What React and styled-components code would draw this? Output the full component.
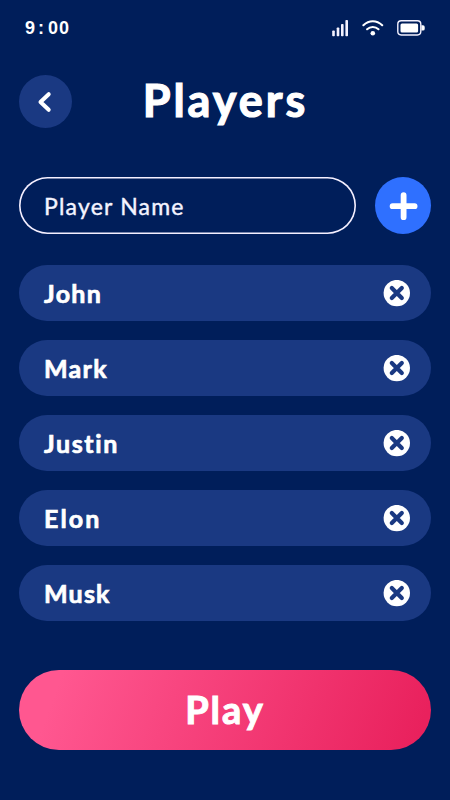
import React, {useState} from 'react'
import styled, {createGlobalStyle} from 'styled-components'


const GlobalStyle = createGlobalStyle`
    * {
        box-sizing: border-box;
    }
    body {
        margin: 0;
        background: #001e5a;
    }
    button, input {
        font-family: inherit;
        border: none;
        padding: 0;
        cursor: pointer;
    }
`;

const StyledScreen = styled.div`
    width: 450px;
    height: 800px;
    padding: 0 19px;
    background: #001e5a;
    color: #ffffff;
    font-family: Lato, "Noto Sans", sans-serif;
    overflow: hidden;
`;

const StyledStatusBar = styled.div`
    height: 55px;
    padding: 0 6px;
    display: flex;
    align-items: center;
    justify-content: space-between;
`;

const StyledTime = styled.div`
    padding-top: 2px;
    font-family: "Liberation Sans", sans-serif;
    font-size: 18px;
    font-weight: 700;
    letter-spacing: 1px;
`;

const StyledColon = styled.span`
    margin: 0 3px 0 2px;
`;

const StyledStatusIcons = styled.div`
    display: flex;
    align-items: center;
    gap: 13px;
`;

const StyledHeader = styled.header`
    height: 53px;
    margin-top: 20px;
    display: grid;
    grid-template-columns: 53px 1fr 53px;
    align-items: center;
`;

const StyledBackButton = styled.button`
    width: 53px;
    height: 53px;
    border-radius: 50%;
    background: #1a3982;
    display: flex;
    align-items: center;
    justify-content: center;
`;

const StyledTitle = styled.h1`
    margin: 0;
    padding: 0 0 3px 1px;
    font-size: 45px;
    line-height: 50px;
    font-weight: 700;
    letter-spacing: 3px;
    text-align: center;
    -webkit-text-stroke: 1.2px #ffffff;
`;

const StyledForm = styled.div`
    margin-top: 49px;
    display: flex;
    gap: 19px;
`;

const StyledInput = styled.input`
    width: 337px;
    height: 57px;
    padding: 0 25px;
    border-radius: 29px;
    box-shadow: inset 0 0 0 1.6px #f4efff;
    outline: none;
    background: transparent;
    color: #ffffff;
    font-size: 23px;
    letter-spacing: 1.2px;
    cursor: text;
    -webkit-text-stroke: 0.4px #f4f4ff;

    &::placeholder {
        color: #f4f4ff;
        opacity: 1;
    }
`;

const StyledAddButton = styled.button`
    width: 57px;
    height: 57px;
    border-radius: 50%;
    background: #2f70ff;
    display: flex;
    align-items: center;
    justify-content: center;
`;

const StyledList = styled.ul`
    margin: 31px 0 0;
    padding: 0;
    list-style: none;
    display: flex;
    flex-direction: column;
    gap: 19px;
`;

const StyledPlayer = styled.li`
    height: 56px;
    padding: 0 21px 0 25px;
    border-radius: 28px;
    background: #1a3982;
    display: flex;
    align-items: center;
    justify-content: space-between;
`;

const StyledName = styled.span`
    font-size: 25px;
    font-weight: 700;
    letter-spacing: ${props => props.$spacing}px;
    -webkit-text-stroke: 0.7px #ffffff;
`;

const StyledRemoveButton = styled.button`
    width: 27px;
    height: 27px;
    background: none;
    display: flex;
`;

const StyledPlayButton = styled.button`
    width: 412px;
    height: 80px;
    margin-top: 49px;
    padding-bottom: 2px;
    border-radius: 40px;
    background: linear-gradient(110deg, #ff5790 10%, #e9215d 96%);
    color: #ffffff;
    font-size: 38px;
    font-weight: 700;
    letter-spacing: 2px;
    -webkit-text-stroke: 1px #ffffff;
`;

const SignalIcon = () => (
    <svg width="17" height="18" viewBox="0 0 17 18" fill="#f4f2ff">
        <rect x="0.2" y="11.5" width="2.6" height="5.8" rx="0.8" />
        <rect x="4.7" y="8.5" width="2.6" height="8.8" rx="0.8" />
        <rect x="9" y="5" width="2.6" height="12.3" rx="0.8" />
        <rect x="13.4" y="1" width="2.6" height="16.3" rx="0.8" />
    </svg>
)

const WifiIcon = () => (
    <svg width="22" height="18" viewBox="0 0 22 18" fill="none" stroke="#ffffff" strokeWidth="2.1" strokeLinecap="round">
        <path d="M1.4 6.2C7 0.9 14.6 0.9 20.2 6.2" />
        <path d="M5.1 10.2C8.3 7.2 13.3 7.2 16.5 10.2" />
        <circle cx="10.8" cy="14.3" r="2.3" fill="#ffffff" stroke="none" />
    </svg>
)

const BatteryIcon = () => (
    <svg width="28" height="16" viewBox="0 0 28 16">
        <rect x="0.8" y="0.8" width="23" height="14.2" rx="3.4" fill="none" stroke="#f4f2ff" strokeWidth="1.4" />
        <rect x="3.5" y="3.4" width="17.6" height="9" rx="1.5" fill="#ffffff" />
        <path d="M24.4 5.2h1.6a1.7 1.7 0 0 1 1.7 1.7v2a1.7 1.7 0 0 1-1.7 1.7h-1.6z" fill="#ffffff" />
    </svg>
)

const BackIcon = () => (
    <svg width="20" height="24" viewBox="0 0 20 24" fill="none" stroke="#ffffff" strokeWidth="4" strokeLinecap="round" strokeLinejoin="round">
        <path d="M12.7 4.2L4.5 12L12.7 19.8" />
    </svg>
)

const PlusIcon = () => (
    <svg width="30" height="30" viewBox="0 0 30 30" stroke="#ffffff" strokeWidth="5.8" strokeLinecap="round">
        <path d="M15.6 4.2V26.2M4.6 15.2H26.6" />
    </svg>
)

const RemoveIcon = () => (
    <svg width="27" height="27" viewBox="0 0 27 27">
        <circle cx="13.8" cy="13.1" r="13.2" fill="#ffffff" />
        <path d="M8.8 8.1L18.8 18.1M18.8 8.1L8.8 18.1" stroke="#1a3982" strokeWidth="4.2" strokeLinecap="round" />
    </svg>
)

const PlayerRow = (props) => (
    <StyledPlayer>
        <StyledName $spacing={props.spacing}>{props.name}</StyledName>
        <StyledRemoveButton aria-label="Remove" onClick={props.onRemove}><RemoveIcon /></StyledRemoveButton>
    </StyledPlayer>
)

const App = () => {
    const [name, setName] = useState('')
    const [players, setPlayers] = useState([
        {name: 'John', spacing: 1.3},
        {name: 'Mark', spacing: 1.3},
        {name: 'Justin', spacing: 1.6},
        {name: 'Elon', spacing: 2.1},
        {name: 'Musk', spacing: 1.2}
    ])

    const addPlayer = () => {
        if (!name.trim()) return
        setPlayers([...players, {name: name.trim(), spacing: 1.3}])
        setName('')
    };

    const removePlayer = (index) => {
        setPlayers(players.filter((_, i) => i !== index))
    };

    return (
        <StyledScreen>
            <GlobalStyle />
            <StyledStatusBar>
                <StyledTime>9<StyledColon>:</StyledColon>00</StyledTime>
                <StyledStatusIcons>
                    <SignalIcon />
                    <WifiIcon />
                    <BatteryIcon />
                </StyledStatusIcons>
            </StyledStatusBar>
            <StyledHeader>
                <StyledBackButton aria-label="Back"><BackIcon /></StyledBackButton>
                <StyledTitle>Players</StyledTitle>
            </StyledHeader>
            <StyledForm>
                <StyledInput placeholder="Player Name" value={name} onChange={e => setName(e.target.value)} />
                <StyledAddButton aria-label="Add" onClick={addPlayer}><PlusIcon /></StyledAddButton>
            </StyledForm>
            <StyledList>
                {players.map((player, i) => (
                    <PlayerRow key={i} name={player.name} spacing={player.spacing} onRemove={() => removePlayer(i)} />
                ))}
            </StyledList>
            <StyledPlayButton>Play</StyledPlayButton>
        </StyledScreen>
    )
}

export default App;
